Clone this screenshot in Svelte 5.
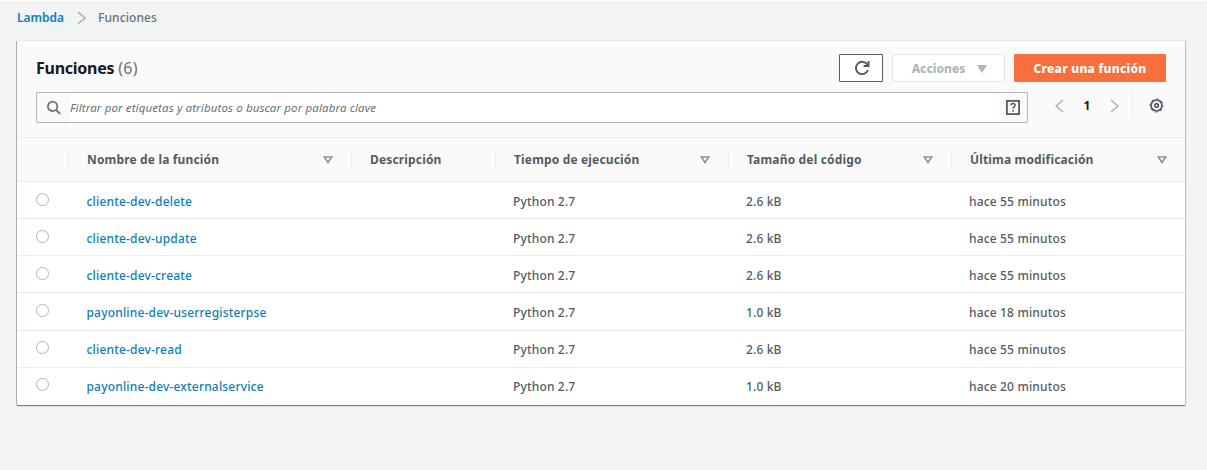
<script>
  const columns = [
    { label: 'Nombre de la función', sort: true },
    { label: 'Descripción', sort: false },
    { label: 'Tiempo de ejecución', sort: true },
    { label: 'Tamaño del código', sort: true },
    { label: 'Última modificación', sort: true }
  ];
  const rows = [
    ['cliente-dev-delete', '', 'Python 2.7', '2.6 kB', 'hace 55 minutos'],
    ['cliente-dev-update', '', 'Python 2.7', '2.6 kB', 'hace 55 minutos'],
    ['cliente-dev-create', '', 'Python 2.7', '2.6 kB', 'hace 55 minutos'],
    ['payonline-dev-userregisterpse', '', 'Python 2.7', '1.0 kB', 'hace 18 minutos'],
    ['cliente-dev-read', '', 'Python 2.7', '2.6 kB', 'hace 55 minutos'],
    ['payonline-dev-externalservice', '', 'Python 2.7', '1.0 kB', 'hace 20 minutos']
  ];
</script>

<div class="page">
  <nav class="crumbs">
    <span class="link home">Lambda</span>
    <svg width="10" height="14" viewBox="0 0 10 14"><path d="M1 1.2 8 7 1 12.8" fill="none" stroke="#aab7b8" stroke-width="1.6" /></svg>
    <span class="here">Funciones</span>
  </nav>

  <main class="panel">
    <header class="top">
      <h1>Funciones <span>(6)</span></h1>
      <div class="buttons">
        <button class="refresh" aria-label="Actualizar">
          <svg width="16" height="16" viewBox="0 0 16 16"><path d="M13.9 10.2A6.2 6.2 0 1 1 13.3 4.5L14.2 6M14.6 .9V6H9.6" fill="none" stroke="#545b64" stroke-width="1.9" /></svg>
        </button>
        <button class="actions">Acciones <svg width="10" height="8" viewBox="0 0 10 8"><path d="M0 0H10L5 8Z" fill="#aab7b8" /></svg></button>
        <button class="create">Crear una función</button>
      </div>
    </header>

    <div class="tools">
      <div class="search">
        <span class="lens"><svg width="16" height="16" viewBox="0 0 16 16"><circle cx="6.6" cy="6.4" r="4.7" fill="none" stroke="#687078" stroke-width="1.8" /><path d="m10 9.9 4.2 4" stroke="#687078" stroke-width="2" /></svg></span>
        <span class="hint">Filtrar por etiquetas y atributos o buscar por palabra clave</span>
        <span class="help"><svg width="14" height="15" viewBox="0 0 14 15" fill="none" stroke="#545b64"><rect x=".9" y=".9" width="12.2" height="13.2" stroke-width="1.8" /><path d="M4.9 5.3C5 3.9 5.9 3.5 7 3.5S9.1 4.1 9.1 5.3C9.1 6.8 7.1 6.9 7.1 8.8M7.1 10v1.7" stroke-width="1.5" /></svg></span>
      </div>
      <div class="pager">
        <svg width="9" height="14" viewBox="0 0 9 14"><path d="M8 1 1.2 7 8 13" fill="none" stroke="#aab7b8" stroke-width="1.6" /></svg>
        <b>1</b>
        <svg width="9" height="14" viewBox="0 0 9 14"><path d="M1 1 7.8 7 1 13" fill="none" stroke="#aab7b8" stroke-width="1.6" /></svg>
      </div>
      <div class="settings">
        <svg width="15" height="15" viewBox="0 0 15 15" fill="none" stroke="#545b64"><circle cx="7.5" cy="7.5" r="5.4" stroke-width="1.7" /><circle cx="7.5" cy="7.5" r="6.5" stroke-width="1" stroke-dasharray="2.8 2.305" stroke-dashoffset="1.4" /><circle cx="7.5" cy="7.5" r="1.8" stroke-width="1.7" /></svg>
      </div>
    </div>

    <div class="grid head">
      <div></div>
      {#each columns as column}
        <div class="th">
          <span>{column.label}</span>
          {#if column.sort}
            <svg width="10" height="8" viewBox="0 0 10 8"><path d="M1.3 1H8.7L5 6.5Z" fill="none" stroke="#879596" stroke-width="1.6" /></svg>
          {/if}
        </div>
      {/each}
    </div>

    {#each rows as row}
      <div class="grid row">
        <div class="pick"><span class="radio"></span></div>
        {#each row as cell, i}
          <div class="td" class:link={i === 0}>{cell}</div>
        {/each}
      </div>
    {/each}
  </main>
</div>

<style>
  :global(body) { background: #f2f3f3; }
  .page {
    box-sizing: border-box;
    height: 470px;
    border-top: 1px solid #fff;
    padding: 0 22px 0 17px;
    background: #f2f3f3;
    color: #545b64;
    font: 12px/18px "Noto Sans", "Open Sans", sans-serif;
    overflow: hidden;
  }
  .crumbs { display: flex; align-items: center; height: 33px; margin-bottom: 7px; font-weight: 500; }
  .crumbs svg { margin: 0 11px 0 13px; }
  .home { width: 47px; white-space: nowrap; font-weight: 600; }
  .here { color: #687078; letter-spacing: 0.1px; }
  .link { color: #0a7fb9; }
  .panel {
    background: #fff;
    height: 364px;
    box-shadow: 0 1px 1px rgba(0, 28, 36, 0.5), -1px 0 0 #b6bfc1, 1px 0 1px #cbd0d1, 0 -1px 0 #eaeded;
  }
  .top { display: flex; justify-content: space-between; height: 51px; box-sizing: border-box; padding: 13px 19px 0; background: #fafafa; }
  h1 { margin: 0; font-size: 16px; line-height: 28px; font-weight: 700; color: #16191f; letter-spacing: -0.25px; }
  h1 span { font-weight: 400; color: #687078; letter-spacing: 0.2px; }
  .buttons { display: flex; gap: 9px; }
  button { box-sizing: border-box; height: 28px; padding: 0; border: 1px solid #545b64; border-radius: 1px; background: #fff; font: 800 12px/18px "Noto Sans", sans-serif; display: flex; align-items: center; justify-content: center; }
  .refresh { width: 44px; padding-left: 2px; }
  .actions { width: 113px; border-color: #dfe4e4; color: #aab7b8; gap: 12px; padding-left: 2px; padding-top: 1px; }
  .create { width: 152px; border: 0; background: #f86f3c; color: #fff; letter-spacing: 0.25px; padding-top: 1px; }
  .tools { display: flex; height: 45px; padding-left: 19px; background: #fafafa; }
  .search { box-sizing: border-box; display: flex; width: 992px; height: 31px; border: 1px solid #aab7b8; border-radius: 1px; background: #fff; }
  .lens { display: flex; align-items: center; width: 33px; padding-left: 9px; box-sizing: border-box; background: #fafafa; }
  .hint { flex: 1; line-height: 30px; font-size: 11.5px; font-style: italic; color: #687078; letter-spacing: 0.12px; }
  .help { display: flex; align-items: center; justify-content: center; width: 28px; background: #fafafa; }
  .pager { display: flex; align-items: center; height: 27px; margin-left: 27px; width: 64px; justify-content: space-between; }
  .pager b { color: #16191f; }
  .settings { display: flex; align-items: center; height: 27px; margin-left: 13px; padding-left: 16px; border-left: 1px solid #eaeded; }
  .grid { display: grid; grid-template-columns: 51px 283px 144px 233px 223px 234px; }
  .head { height: 45px; box-sizing: border-box; border-top: 1px solid #eaeded; border-bottom: 1px solid #eaeded; background: #fafafa; align-items: center; font-weight: 700; letter-spacing: 0.16px; }
  .th { display: flex; align-items: center; justify-content: space-between; height: 22px; border-left: 1px solid #eaeded; padding: 1px 18px 0; box-sizing: border-box; white-space: nowrap; }
  .th svg { margin-top: -1px; }
  .row { height: 37.15px; box-sizing: border-box; border-bottom: 1px solid #eaeded; font-weight: 500; letter-spacing: 0.16px; }
  .row:last-child { border-bottom: 0; }
  .td { padding: 0.5px 0 0 18px; line-height: 38px; height: 36px; box-sizing: border-box; white-space: nowrap; }
  .td.link { padding-left: 18.5px; letter-spacing: 0.18px; }
  .pick { padding: 10.5px 0 0 18.5px; }
  .radio { display: block; box-sizing: border-box; width: 13px; height: 13px; border: 1px solid #aab7b8; border-radius: 50%; background: #fff; }
</style>
